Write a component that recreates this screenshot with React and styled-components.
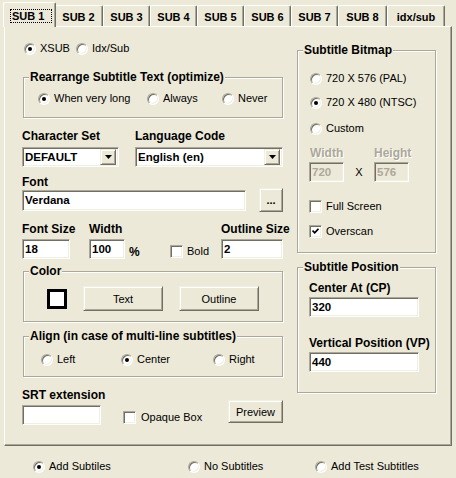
import React from 'react'
import styled, { createGlobalStyle } from 'styled-components'

const GlobalStyle = createGlobalStyle`
  html, body {
    margin: 0;
    background: #ece9d8;
  }
  body {
    font-family: "Liberation Sans", Arial, sans-serif;
    font-size: 11px;
    color: #000;
  }
`

const Window = styled.div`
  width: 456px;
  height: 478px;
  box-sizing: border-box;
  padding: 5px 0 0 4px;
  display: flex;
  flex-direction: column;
  overflow: hidden;
`

const TabRow = styled.div`
  display: flex;
  align-items: flex-end;
  height: 21px;
  padding-left: 1px;
`

const Tab = styled.div`
  position: relative;
  z-index: ${p => (p.$active ? 1 : 0)};
  box-sizing: border-box;
  width: ${p => p.$w}px;
  height: ${p => (p.$active ? 25 : 21)}px;
  margin: ${p => (p.$active ? '0 -2px -1px -2px' : '0')};
  padding-top: ${p => (p.$active ? 6 : 5)}px;
  background: #ece9d8;
  border-top: 1px solid #fff;
  border-left: 1px solid #fff;
  border-right: 1px solid #716f64;
  border-radius: 2px 2px 0 0;
  box-shadow: inset -1px 0 0 #aca899;
  text-align: center;
  font-weight: bold;
  line-height: 13px;
`

const Focus = styled.span`
  display: inline-block;
  box-sizing: border-box;
  width: 42px;
  height: 14px;
  margin-left: 3px;
  border: 1px dotted #000;
  line-height: 12px;
  text-align: left;
  padding-left: 1px;
`

const Panel = styled.div`
  box-sizing: border-box;
  width: 448px;
  height: 420px;
  display: flex;
  gap: 14px;
  padding-left: 17px;
  border: 1px solid;
  border-color: #fff #716f64 #716f64 #fff;
  box-shadow: inset -1px -1px 0 #aca899;
`

const Column = styled.div`
  display: flex;
  flex-direction: column;
  width: ${p => p.$w}px;
  padding-top: ${p => p.$pt || 0}px;
`

const Group = styled.div`
  box-sizing: border-box;
  width: ${p => p.$w}px;
  height: ${p => p.$h}px;
  margin: ${p => p.$mt}px 0 0 ${p => p.$ml || 0}px;
  border: 1px solid #aca899;
  box-shadow: inset 1px 1px 0 #fff, 1px 1px 0 #fff;
  display: flex;
  flex-direction: column;
`

const GroupTitle = styled.div`
  align-self: flex-start;
  margin: -7px 0 0 5px;
  padding: 0 1px;
  background: #ece9d8;
  font-size: 12px;
  font-weight: bold;
  line-height: 13px;
`

const Row = styled.div`
  display: flex;
  align-items: ${p => p.$align || 'center'};
  height: ${p => (p.$h ? `${p.$h}px` : 'auto')};
  margin-top: ${p => p.$mt || 0}px;
  padding-left: ${p => p.$pl || 0}px;
`

const Option = styled.label`
  display: flex;
  align-items: center;
  gap: ${p => p.$gap || 4}px;
  width: ${p => (p.$w ? `${p.$w}px` : 'auto')};
  height: 13px;
  margin-top: ${p => p.$mt || 0}px;
  line-height: 13px;
  white-space: nowrap;
`

const Radio = styled.span`
  flex: none;
  box-sizing: border-box;
  width: 12px;
  height: 12px;
  border-radius: 50%;
  border: 1px solid;
  border-color: #aca899 #fff #fff #aca899;
  background: #fff;
  box-shadow: inset 1px 1px 0 #716f64, inset -1px -1px 0 #f1efe2;
  display: flex;
  align-items: center;
  justify-content: center;
  &::after {
    content: '';
    width: 4px;
    height: 4px;
    border-radius: 50%;
    background: ${p => (p.$on ? '#000' : 'transparent')};
  }
`

const CheckBox = styled.span`
  flex: none;
  box-sizing: border-box;
  width: 13px;
  height: 13px;
  border: 1px solid;
  border-color: #aca899 #fff #fff #aca899;
  background: #fff;
  box-shadow: inset 1px 1px 0 #716f64, inset -1px -1px 0 #f1efe2;
  display: flex;
  align-items: center;
  justify-content: center;
`

const Label = styled.div`
  font-size: 12px;
  font-weight: bold;
  line-height: 13px;
  white-space: nowrap;
  margin: ${p => p.$mt || 0}px 0 0 ${p => p.$ml || 0}px;
  color: ${p => (p.$off ? '#aca899' : '#000')};
  text-shadow: ${p => (p.$off ? '1px 1px 0 #fff' : 'none')};
`

const Field = styled.div`
  display: flex;
  flex-direction: column;
  flex: none;
  width: ${p => p.$w}px;
  margin-left: ${p => p.$ml || 0}px;
`

const TextBox = styled.div`
  box-sizing: border-box;
  width: ${p => p.$w}px;
  height: ${p => p.$h || 20}px;
  margin: ${p => p.$mt || 0}px 0 0 ${p => p.$ml || 0}px;
  padding-left: 2px;
  border: 1px solid;
  border-color: #aca899 #fff #fff #aca899;
  box-shadow: inset 1px 1px 0 #716f64, inset -1px -1px 0 #f1efe2;
  background: ${p => (p.$off ? '#ece9d8' : '#fff')};
  color: ${p => (p.$off ? '#aca899' : '#000')};
  display: flex;
  align-items: center;
  font-size: 11.5px;
  font-weight: bold;
`

const SelectBox = styled(TextBox)`
  padding-right: 2px;
  justify-content: space-between;
`

const DropButton = styled.span`
  box-sizing: border-box;
  width: 16px;
  height: 16px;
  background: #ece9d8;
  border: 1px solid;
  border-color: #f1efe2 #716f64 #716f64 #f1efe2;
  box-shadow: inset 1px 1px 0 #fff, inset -1px -1px 0 #aca899;
  display: flex;
  align-items: center;
  justify-content: center;
`

const Button = styled.div`
  box-sizing: border-box;
  flex: none;
  width: ${p => p.$w}px;
  height: ${p => p.$h || 25}px;
  margin: ${p => p.$mt || 0}px 0 0 ${p => p.$ml || 0}px;
  background: #ece9d8;
  border: 1px solid;
  border-color: #f1efe2 #716f64 #716f64 #f1efe2;
  box-shadow: inset 1px 1px 0 #fff, inset -1px -1px 0 #aca899;
  display: flex;
  align-items: center;
  justify-content: center;
  font-weight: ${p => (p.$bold ? 'bold' : 'normal')};
`

const Swatch = styled.div`
  box-sizing: border-box;
  width: 20px;
  height: 20px;
  margin-left: 23px;
  border: 3px solid #000;
  background: #fff;
`

const Unit = styled.div`
  align-self: flex-end;
  flex: none;
  width: 41px;
  margin-left: 4px;
  font-size: 12px;
  font-weight: bold;
  line-height: 13px;
`

const Times = styled.div`
  align-self: flex-end;
  width: 30px;
  height: 20px;
  line-height: 20px;
  text-align: center;
`

const BottomRow = styled.div`
  display: flex;
  margin-top: 14px;
  padding-left: 29px;
`

const Tick = () => (
  <svg width="7" height="7" viewBox="0 0 7 7">
    <path d="M0.5 2.5 L2.7 4.8 L6.5 0.8" fill="none" stroke="#000" strokeWidth="1.8" />
  </svg>
)

const Arrow = () => (
  <svg width="7" height="4" viewBox="0 0 7 4">
    <path d="M0 0 H7 L3.5 4 Z" fill="#000" />
  </svg>
)

const RadioOption = ({ on, w, children }) => (
  <Option $w={w}>
    <Radio $on={on} />
    {children}
  </Option>
)

const CheckOption = ({ on, w, mt, gap, children }) => (
  <Option $w={w} $mt={mt} $gap={gap || 4}>
    <CheckBox>{on && <Tick />}</CheckBox>
    {children}
  </Option>
)

const Select = ({ w, value }) => (
  <SelectBox $w={w} $mt={4}>
    <span>{value}</span>
    <DropButton>
      <Arrow />
    </DropButton>
  </SelectBox>
)

const tabs = [
  ['SUB 1', 53],
  ['SUB 2', 49],
  ['SUB 3', 47],
  ['SUB 4', 47],
  ['SUB 5', 47],
  ['SUB 6', 47],
  ['SUB 7', 47],
  ['SUB 8', 49],
  ['idx/sub', 58],
]

export default function App() {
  return (
    <Window>
      <GlobalStyle />
      <TabRow>
        {tabs.map(([name, w], i) =>
          i === 0 ? (
            <Tab key={name} $w={w} $active>
              <Focus>{name}</Focus>
            </Tab>
          ) : (
            <Tab key={name} $w={w}>{name}</Tab>
          )
        )}
      </TabRow>

      <Panel>
        <Column $w={261} $pt={15}>
          <Row $h={13} $pl={2}>
            <RadioOption on w={52}>XSUB</RadioOption>
            <RadioOption>Idx/Sub</RadioOption>
          </Row>

          <Group $mt={22} $ml={1} $w={260} $h={41}>
            <GroupTitle>Rearrange Subtitle Text (optimize)</GroupTitle>
            <Row $mt={8} $pl={14}>
              <RadioOption on w={109}>When very long</RadioOption>
              <RadioOption w={75}>Always</RadioOption>
              <RadioOption>Never</RadioOption>
            </Row>
          </Group>

          <Row $mt={12} $align="flex-start">
            <Field $w={97}>
              <Label>Character Set</Label>
              <Select w={97} value="DEFAULT" />
            </Field>
            <Field $w={148} $ml={16}>
              <Label>Language Code</Label>
              <Select w={148} value="English (en)" />
            </Field>
          </Row>

          <Label $mt={9}>Font</Label>
          <Row $mt={-1} $h={24}>
            <TextBox $w={224} $h={21}>Verdana</TextBox>
            <Button $w={24} $h={24} $ml={13} $bold>...</Button>
          </Row>

          <Row $mt={11} $align="flex-end">
            <Field $w={48}>
              <Label>Font Size</Label>
              <TextBox $w={48} $mt={3}>18</TextBox>
            </Field>
            <Field $w={36} $ml={19}>
              <Label>Width</Label>
              <TextBox $w={36} $mt={3}>100</TextBox>
            </Field>
            <Unit>%</Unit>
            <Option $w={51} style={{ alignSelf: 'flex-end', marginBottom: 1 }}>
              <CheckBox />
              Bold
            </Option>
            <Field $w={62}>
              <Label>Outline Size</Label>
              <TextBox $w={62} $mt={3}>2</TextBox>
            </Field>
          </Row>

          <Group $mt={12} $ml={1} $w={260} $h={51}>
            <GroupTitle>Color</GroupTitle>
            <Row $mt={8} $h={25}>
              <Swatch />
              <Button $w={80} $ml={16}>Text</Button>
              <Button $w={80} $ml={16}>Outline</Button>
            </Row>
          </Group>

          <Group $mt={14} $ml={1} $w={260} $h={41}>
            <GroupTitle>Align (in case of multi-line subtitles)</GroupTitle>
            <Row $mt={10} $pl={17}>
              <RadioOption w={80}>Left</RadioOption>
              <RadioOption on w={92}>Center</RadioOption>
              <RadioOption>Right</RadioOption>
            </Row>
          </Group>

          <Row $mt={12} $align="flex-start">
            <Field $w={79}>
              <Label>SRT extension</Label>
              <TextBox $w={79} $mt={3} />
            </Field>
            <Field $w={105} $ml={22}>
              <CheckOption w={105} mt={22} gap={5}>Opaque Box</CheckOption>
            </Field>
            <Button $w={55} $h={23} $mt={11}>Preview</Button>
          </Row>
        </Column>

        <Column $w={140}>
          <Group $mt={23} $w={139} $h={203}>
            <GroupTitle>Subtitle Bitmap</GroupTitle>
            <Row $mt={15} $pl={12}>
              <RadioOption>720 X 576 (PAL)</RadioOption>
            </Row>
            <Row $mt={11} $pl={12}>
              <RadioOption on>720 X 480 (NTSC)</RadioOption>
            </Row>
            <Row $mt={13} $pl={12}>
              <RadioOption>Custom</RadioOption>
            </Row>
            <Row $mt={12} $pl={11} $align="flex-start">
              <Field $w={35}>
                <Label $off $ml={1}>Width</Label>
                <TextBox $off $w={35} $mt={2}>720</TextBox>
              </Field>
              <Times>X</Times>
              <Field $w={35}>
                <Label $off>Height</Label>
                <TextBox $off $w={35} $mt={2}>576</TextBox>
              </Field>
            </Row>
            <Row $mt={18} $pl={11}>
              <CheckOption>Full Screen</CheckOption>
            </Row>
            <Row $mt={12} $pl={11}>
              <CheckOption on>Overscan</CheckOption>
            </Row>
          </Group>

          <Group $mt={14} $w={139} $h={126}>
            <GroupTitle>Subtitle Position</GroupTitle>
            <Label $mt={8} $ml={11}>Center At (CP)</Label>
            <TextBox $w={110} $mt={2} $ml={11}>320</TextBox>
            <Label $mt={20} $ml={11}>Vertical Position (VP)</Label>
            <TextBox $w={110} $mt={2} $ml={11}>440</TextBox>
          </Group>
        </Column>
      </Panel>

      <BottomRow>
        <RadioOption on w={155}>Add Subtiles</RadioOption>
        <RadioOption w={127}>No Subtitles</RadioOption>
        <RadioOption>Add Test Subtitles</RadioOption>
      </BottomRow>
    </Window>
  )
}
